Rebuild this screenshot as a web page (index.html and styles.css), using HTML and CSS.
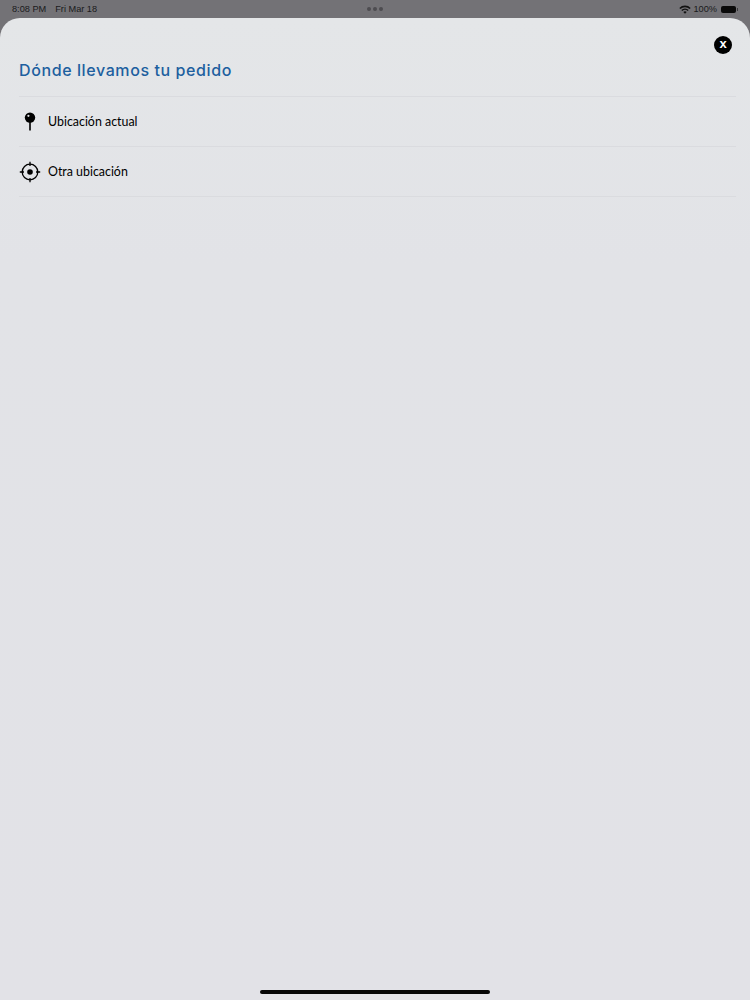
FILE: index.html
```html
<!DOCTYPE html>
<html lang="en">
<head>
    <meta charset="UTF-8">
    <title>Dónde llevamos tu pedido</title>
    <link rel="stylesheet" href="styles.css">
</head>
<body>
    <div class="status-bar">
        <div class="status-left">
            <span>8:08 PM</span>
            <span>Fri Mar 18</span>
        </div>
        <div class="status-dots">
            <span class="dot"></span>
            <span class="dot"></span>
            <span class="dot"></span>
        </div>
        <div class="status-right">
            <svg class="wifi-icon" width="12" height="9" viewBox="0 0 12 9">
                <path d="M0.3 3 A8 8 0 0 1 11.7 3 L10.6 4.1 A6.5 6.5 0 0 0 1.4 4.1 Z" fill="#111"/>
                <path d="M2.3 5 A5.2 5.2 0 0 1 9.7 5 L8.6 6.1 A3.7 3.7 0 0 0 3.4 6.1 Z" fill="#111"/>
                <path d="M4.3 7 A2.5 2.5 0 0 1 7.7 7 L6 8.8 Z" fill="#111"/>
            </svg>
            <span>100%</span>
            <span class="battery"></span>
        </div>
    </div>

    <div class="sheet">
        <div class="sheet-top">
            <button class="close-btn">x</button>
        </div>
        <div class="title">Dónde llevamos tu pedido</div>

        <div class="option-list">
            <div class="option">
                <span class="option-icon">
                    <svg width="22" height="22" viewBox="0 0 22 22">
                        <circle cx="11" cy="6.6" r="5.2" fill="#000"/>
                        <rect x="10.2" y="10" width="1.6" height="9.5" fill="#000"/>
                        <circle cx="9.4" cy="4.8" r="1.1" fill="#e2e3e7"/>
                    </svg>
                </span>
                <span class="option-label">Ubicación actual</span>
            </div>
            <div class="option">
                <span class="option-icon">
                    <svg width="22" height="22" viewBox="0 0 22 22">
                        <circle cx="11" cy="11" r="7.8" fill="none" stroke="#000" stroke-width="1.3"/>
                        <circle cx="11" cy="11" r="2.8" fill="#000"/>
                        <path d="M11 0.8V5M11 17V21.2M0.8 11H5M17 11H21.2" stroke="#000" stroke-width="1.3"/>
                    </svg>
                </span>
                <span class="option-label">Otra ubicación</span>
            </div>
        </div>

        <div class="home-bar"></div>
    </div>
</body>
</html>
```

FILE: styles.css
```css
* {
    margin: 0;
    padding: 0;
    box-sizing: border-box;
}

body {
    background: #737276;
    width: 750px;
    height: 1000px;
    overflow: hidden;
    font-family: 'Liberation Sans', Arial, sans-serif;
    display: flex;
    flex-direction: column;
}

.status-bar {
    height: 18px;
    flex-shrink: 0;
    display: grid;
    grid-template-columns: 1fr auto 1fr;
    align-items: center;
    padding: 0 12px;
    font-size: 9.2px;
    color: #1a1a1c;
}

.status-left {
    display: flex;
    gap: 9px;
}

.status-dots {
    display: flex;
    gap: 2px;
}

.dot {
    width: 4px;
    height: 4px;
    border-radius: 50%;
    background: #4d4c50;
}

.status-right {
    display: flex;
    justify-content: flex-end;
    align-items: center;
    gap: 3px;
}

.battery {
    position: relative;
    width: 15px;
    height: 7px;
    background: #0a0a0a;
    border-radius: 2px;
    margin: 0 2px 0 1px;
}

.battery::after {
    content: '';
    position: absolute;
    top: 2px;
    right: -2px;
    width: 1px;
    height: 3px;
    background: #3a3a3c;
}

.sheet {
    flex: 1;
    display: flex;
    flex-direction: column;
    padding: 0 14px 0 19px;
    background: linear-gradient(180deg, #e4e6e8 0%, #e2e3e7 25%, #e2e2e7 100%);
    border-radius: 20px 20px 0 0;
}

.sheet-top {
    display: flex;
    justify-content: flex-end;
    padding: 18px 4px 0 0;
}

.close-btn {
    width: 18px;
    height: 18px;
    border: none;
    border-radius: 50%;
    background: #000;
    color: #fff;
    font-family: 'Liberation Sans', Arial, sans-serif;
    font-size: 13px;
    font-weight: bold;
    line-height: 14px;
    padding-bottom: 3px;
}

.title {
    margin-top: 6px;
    height: 36px;
    font-family: 'Inter', sans-serif;
    font-size: 16px;
    font-weight: 500;
    line-height: 21px;
    letter-spacing: 0.6px;
    color: #1d5f9f;
}

.option-list {
    flex: 1;
    border-top: 1px solid #dadbdf;
}

.option {
    display: flex;
    align-items: center;
    height: 50px;
    border-bottom: 1px solid #dadbdf;
    gap: 7px;
    font-family: 'Lato', sans-serif;
    font-size: 12.4px;
    color: #000;
}

.option-icon {
    width: 22px;
    height: 22px;
    display: flex;
}

.home-bar {
    width: 230px;
    height: 4px;
    background: #050505;
    border-radius: 2px;
    align-self: center;
    margin: 0 0 6px -5px;
    flex-shrink: 0;
}
```
